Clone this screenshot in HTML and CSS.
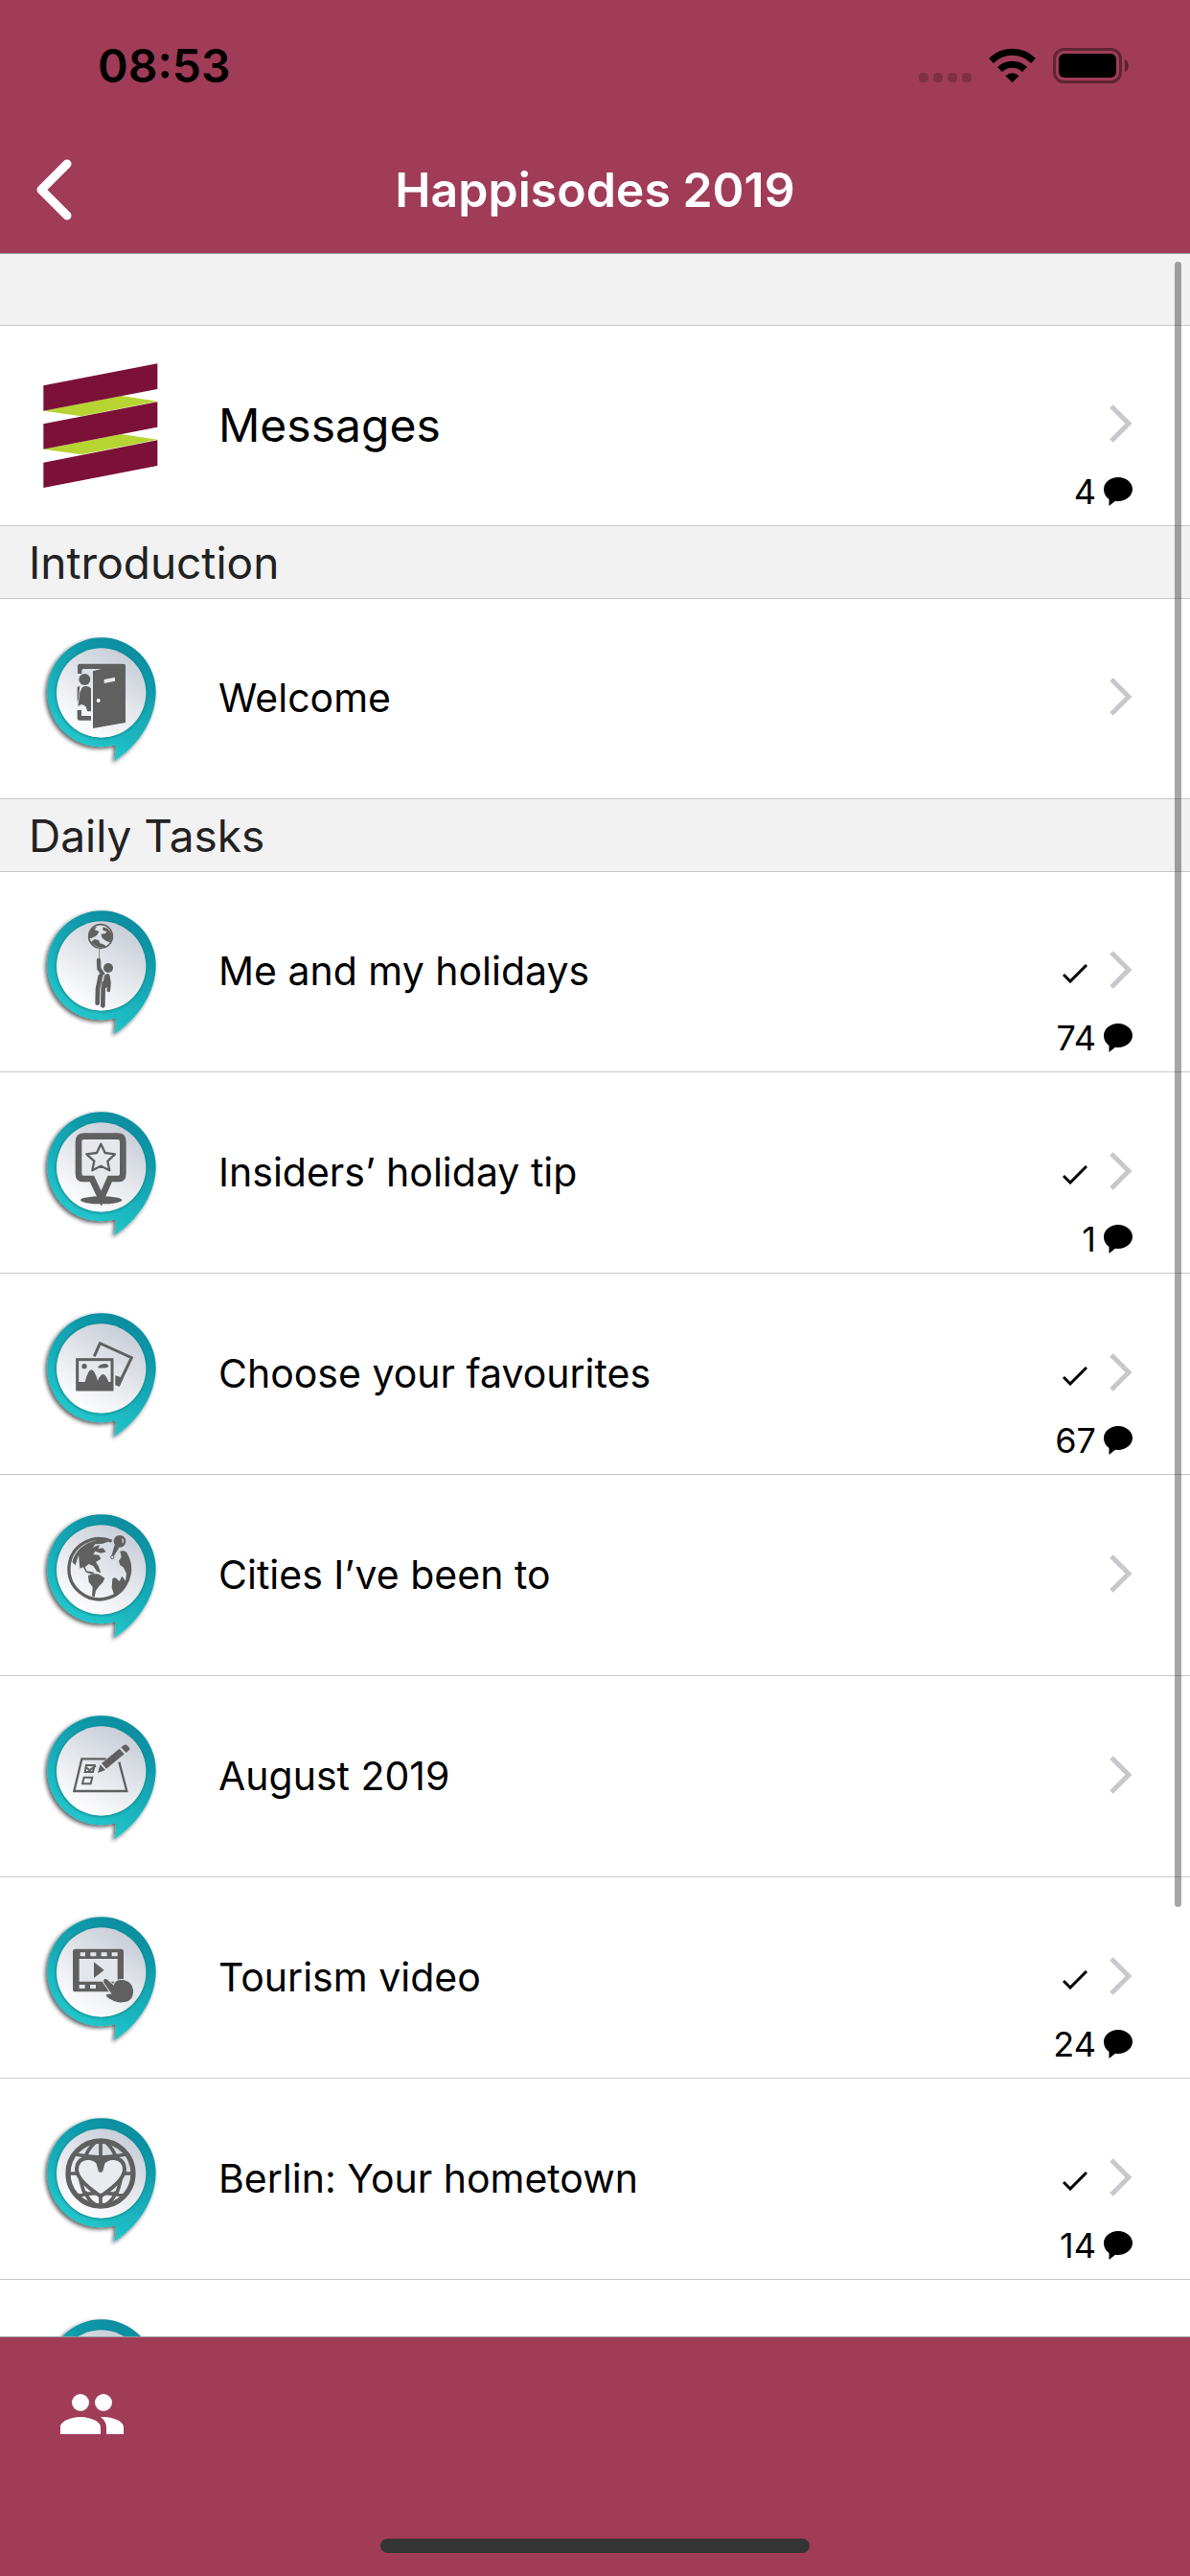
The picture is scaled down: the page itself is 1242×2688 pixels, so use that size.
FILE: index.html
```html
<!DOCTYPE html>
<html lang="en">
<head>
    <meta charset="UTF-8">
    <meta name="viewport" content="width=device-width, initial-scale=1.0">
    <title>Happisodes 2019</title>
    <link rel="stylesheet" href="styles.css">
</head>
<body>
    <!-- Shared shapes -->
    <svg class="defs" aria-hidden="true">
        <defs>
            <linearGradient id="teal" x1="0.75" y1="0.1" x2="0.3" y2="1">
                <stop offset="0" stop-color="#0b8fa1"/>
                <stop offset="1" stop-color="#26ced2"/>
            </linearGradient>
            <linearGradient id="silver" x1="0.8" y1="0.1" x2="0.3" y2="0.95">
                <stop offset="0" stop-color="#c9ced8"/>
                <stop offset="0.5" stop-color="#e4e7eb"/>
                <stop offset="1" stop-color="#fdfdfe"/>
            </linearGradient>
            <filter id="shadow" x="-20%" y="-20%" width="140%" height="140%">
                <feDropShadow dx="-6" dy="6" stdDeviation="6" flood-color="#000" flood-opacity="0.65"/>
            </filter>
            <filter id="soft" x="-20%" y="-20%" width="140%" height="140%">
                <feGaussianBlur stdDeviation="4"/>
            </filter>
            <symbol id="pin" viewBox="60 72 420 420">
                <path d="M302 427C288 431 272 433 258 433A170 171 0 0 1 258 91A170 171 0 0 1 428 262C428 340 380 425 296 478C302 462 303 445 302 427Z" fill="url(#teal)" filter="url(#shadow)"/>
                <circle cx="256" cy="266" r="141" fill="#066" opacity="0.6" filter="url(#soft)"/>
                <circle cx="257" cy="264" r="140" fill="url(#silver)"/>
            </symbol>
            <symbol id="chevron" viewBox="0 0 24 40">
                <path d="M2 2l18 18L2 38" fill="none" stroke="#c7c7cc" stroke-width="5"/>
            </symbol>
            <symbol id="check" viewBox="0 0 26 20">
                <path d="M1 11l7 7L25 1" fill="none" stroke="#000" stroke-width="3"/>
            </symbol>
            <symbol id="bubble" viewBox="0 0 30 30">
                <path d="M15 0c8.300 0 15 5.600 15 12.500S23.300 25 15 25c-1 0-2 0-3-.2L5.500 30v-7C2 20.500 0 17 0 12.500 0 5.600 6.700 0 15 0z"/>
            </symbol>
        </defs>
    </svg>

    <header class="topbar">
        <div class="status">
            <span class="time">08:53</span>
            <div class="status-icons">
                <svg width="55" height="37" viewBox="0 0 55 37" fill="#000" fill-opacity="0.2">
                    <rect y="26" width="10" height="10" rx="4"/>
                    <rect x="15" y="26" width="10" height="10" rx="4"/>
                    <rect x="30" y="26" width="10" height="10" rx="4"/>
                    <rect x="45" y="26" width="10" height="10" rx="4"/>
                </svg>
                <svg width="49" height="37" viewBox="0 0 49 37">
                    <path d="M24.500 36L17.500 29.200a10 10 0 0 1 14 0z"/>
                    <path d="M11.500 22.500a18.500 18.500 0 0 1 26 0" fill="none" stroke="#000" stroke-width="7"/>
                    <path d="M2.500 13.500a31 31 0 0 1 44 0" fill="none" stroke="#000" stroke-width="7"/>
                </svg>
                <svg width="79" height="37" viewBox="0 0 79 37">
                    <rect x="1.500" y="1.500" width="69" height="34" rx="10" fill="none" stroke="#000" stroke-opacity="0.4" stroke-width="3"/>
                    <rect x="6" y="6" width="60" height="25" rx="6"/>
                    <path d="M75 12c5 2 5 11 0 13z" fill-opacity="0.45"/>
                </svg>
            </div>
        </div>
        <nav class="navbar">
            <button class="back" type="button" aria-label="Back">
                <svg width="40" height="64" viewBox="0 0 40 64"><path d="M33 5L6 32l27 27" fill="none" stroke="#fff" stroke-width="9" stroke-linecap="round" stroke-linejoin="round"/></svg>
            </button>
            <h1>Happisodes 2019</h1>
        </nav>
    </header>

    <main class="content">
        <h2 class="section"></h2>
        <ul class="list">
            <li class="row">
                <a href="#messages">
                    <svg class="badge" viewBox="60 72 420 420">
                        <path d="M76 236L195 253L433 206L319 189zM76 356L195 373L433 326L319 309z" fill="#b7d433"/>
                        <path d="M76 157L433 88V168L76 236zM76 277L433 208V287L76 356zM76 398L433 328V408L76 477z" fill="#7b1137"/>
                    </svg>
                    <span class="title large">Messages</span>
                    <span class="meta">
                        <span class="marks"><svg class="chevron"><use href="#chevron"/></svg></span>
                        <span class="count">4<svg class="bubble"><use href="#bubble"/></svg></span>
                    </span>
                </a>
            </li>
        </ul>

        <h2 class="section">Introduction</h2>
        <ul class="list">
            <li class="row">
                <a href="#welcome">
                    <svg class="badge" viewBox="60 72 420 420">
                        <use href="#pin" x="60" y="72" width="420" height="420"/>
                        <g fill="#606060">
                            <path d="M190 173H326Q333 173 333 180V357L231 375V196L258 189H201Q196 189 196 196V204H183V181Q183 173 190 173z"/>
                            <circle cx="205" cy="222" r="18"/>
                            <path d="M198 246Q214 238 225 250V322H214L208 306L196 300L184 306L190 262z"/>
                            <path d="M182 318H195V336H225V350H189Q182 350 182 342z"/>
                            <path d="M182 246L190 242L186 280L182 296z"/>
                        </g>
                        <path d="M266 222L300 215V227L266 234z" fill="#e8eaee"/>
                        <circle cx="248" cy="288" r="6" fill="#fff"/>
                    </svg>
                    <span class="title">Welcome</span>
                    <span class="meta">
                        <span class="marks"><svg class="chevron"><use href="#chevron"/></svg></span>
                    </span>
                </a>
            </li>
        </ul>

        <h2 class="section">Daily Tasks</h2>
        <ul class="list">
            <li class="row">
                <a href="#holidays">
                    <svg class="badge" viewBox="60 72 420 420">
                        <use href="#pin" x="60" y="72" width="420" height="420"/>
                        <circle cx="255" cy="171" r="37" fill="#dfe2e7" stroke="#606060" stroke-width="5"/>
                        <g fill="#606060">
                            <path d="M219 164Q226 142 244 140L236 150L250 156L246 164L240 170L228 176L219 178z"/>
                            <path d="M262 142L276 146Q291 158 291 174L284 190L272 186L260 176L256 164L270 162L274 156L262 152z"/>
                            <path d="M224 190L236 180L250 184L252 192L268 198L272 203Q248 214 224 190z"/>
                            <circle cx="279" cy="270" r="15"/>
                        </g>
                        <path d="M251 208V242" stroke="#888" stroke-width="3"/>
                        <g fill="none" stroke="#606060" stroke-linecap="round">
                            <path d="M249 246L250 272L262 290" stroke-width="13"/>
                            <path d="M278 294L282 316L280 340" stroke-width="11"/>
                            <path d="M254 296L246 335L245 380M268 300L263 335L262 388" stroke-width="14"/>
                            <path d="M276 296L270 326" stroke-width="14"/>
                        </g>
                        <path d="M265 291L262 312" stroke="#e5e7eb" stroke-width="4"/>
                    </svg>
                    <span class="title">Me and my holidays</span>
                    <span class="meta">
                        <span class="marks"><svg class="check"><use href="#check"/></svg><svg class="chevron"><use href="#chevron"/></svg></span>
                        <span class="count">74<svg class="bubble"><use href="#bubble"/></svg></span>
                    </span>
                </a>
            </li>
            <li class="row">
                <a href="#tip">
                    <svg class="badge" viewBox="60 72 420 420">
                        <use href="#pin" x="60" y="72" width="420" height="420"/>
                        <ellipse cx="257" cy="367" rx="65" ry="12" fill="#606060"/>
                        <path d="M204 167H308Q325 167 325 184V284Q325 300 310 300H284L257 362L228 300H202Q186 300 186 284V184Q186 167 204 167z" fill="#e6e8ec" stroke="#606060" stroke-width="20"/>
                        <path d="M243 340H271L262 372H252z" fill="#606060"/>
                        <path d="M256 191L269 219L300 223L277 245L283 274L256 260L229 274L235 245L211 223L243 219z" fill="none" stroke="#606060" stroke-width="7" stroke-linejoin="round"/>
                    </svg>
                    <span class="title">Insiders’ holiday tip</span>
                    <span class="meta">
                        <span class="marks"><svg class="check"><use href="#check"/></svg><svg class="chevron"><use href="#chevron"/></svg></span>
                        <span class="count">1<svg class="bubble"><use href="#bubble"/></svg></span>
                    </span>
                </a>
            </li>
            <li class="row">
                <a href="#favourites">
                    <svg class="badge" viewBox="60 72 420 420">
                        <use href="#pin" x="60" y="72" width="420" height="420"/>
                        <path d="M235 226L253 185L352 230L311 315" fill="none" stroke="#606060" stroke-width="9"/>
                        <path d="M301 286L326 294L314 321L301 316z" fill="#606060"/>
                        <rect x="182" y="236" width="109" height="94" fill="#e6e8ec" stroke="#606060" stroke-width="9"/>
                        <path d="M186 306H206Q216 268 226 268Q236 268 246 302Q254 282 263 282Q271 282 280 306H290V330H186z" fill="#606060"/>
                        <circle cx="204" cy="257" r="8" fill="#606060"/>
                        <path d="M246 262Q250 250 268 249Q280 250 280 258Q272 264 246 262z" fill="#606060"/>
                    </svg>
                    <span class="title">Choose your favourites</span>
                    <span class="meta">
                        <span class="marks"><svg class="check"><use href="#check"/></svg><svg class="chevron"><use href="#chevron"/></svg></span>
                        <span class="count">67<svg class="bubble"><use href="#bubble"/></svg></span>
                    </span>
                </a>
            </li>
            <li class="row">
                <a href="#cities">
                    <svg class="badge" viewBox="60 72 420 420">
                        <use href="#pin" x="60" y="72" width="420" height="420"/>
                        <path d="M290 175A95 95 0 1 0 330 209" fill="none" stroke="#606060" stroke-width="10"/>
                        <g fill="#606060">
                            <path d="M166 240Q180 185 246 170Q270 166 284 174L262 182L238 184L230 196L240 190L252 186L248 198L262 196L272 208L256 212L238 206L232 216L250 218L256 230L240 240L248 252L256 274L244 270L232 252L218 246L206 256L212 268L236 272L228 278L210 272L200 256L190 260L186 218L176 250z"/>
                            <path d="M216 282L232 276L250 278L268 290L262 304L250 316L240 330L236 350L228 346L230 318L218 302z"/>
                            <path d="M316 206L328 204Q350 230 352 268L344 300L334 296L336 276L326 256L316 250L312 236L320 224z"/>
                            <path d="M292 292L300 288L314 300L322 284L332 298L338 308L318 336L298 344L290 320z"/>
                            <circle cx="315" cy="175" r="19"/>
                            <path d="M299 186L313 195L296 222L288 224z"/>
                        </g>
                        <circle cx="292" cy="225" r="5" fill="#eee" stroke="#606060" stroke-width="3"/>
                        <path d="M322 167Q328 173 324 180" fill="none" stroke="#ccc" stroke-width="4"/>
                    </svg>
                    <span class="title">Cities I’ve been to</span>
                    <span class="meta">
                        <span class="marks"><svg class="chevron"><use href="#chevron"/></svg></span>
                    </span>
                </a>
            </li>
            <li class="row">
                <a href="#august">
                    <svg class="badge" viewBox="60 72 420 420">
                        <use href="#pin" x="60" y="72" width="420" height="420"/>
                        <g fill="none" stroke="#606060">
                            <path d="M272 226H196L172 327H337L313 236" stroke-width="7"/>
                            <path d="M203 284H229L224 304H198zM210 246H236L231 267H206zM212 254L220 262L240 248" stroke-width="6"/>
                        </g>
                        <g fill="#606060">
                            <path d="M258 240L314 194L329 211L273 257z"/>
                            <path d="M319 190L332 181Q342 184 347 196L335 207z"/>
                            <path d="M254 244L270 261L246 270z"/>
                        </g>
                    </svg>
                    <span class="title">August 2019</span>
                    <span class="meta">
                        <span class="marks"><svg class="chevron"><use href="#chevron"/></svg></span>
                    </span>
                </a>
            </li>
            <li class="row">
                <a href="#video">
                    <svg class="badge" viewBox="60 72 420 420">
                        <use href="#pin" x="60" y="72" width="420" height="420"/>
                        <rect x="168" y="191" width="159" height="134" rx="8" fill="#606060"/>
                        <path d="M188 222H308V293H188zM191 202H207V214H191zM223 202H241V214H223zM257 202H275V214H257zM290 202H308V214H290zM188 303H206V315H188zM222 303H240V315H222z" fill="#e3e6ea"/>
                        <path d="M234 232L266 257L234 282z" fill="#606060"/>
                        <path d="M265 296Q262 282 274 286L296 305Q300 288 320 288Q356 290 357 325Q356 358 322 358Q300 360 276 342Q268 332 282 332L290 332z" fill="#606060" stroke="#e3e6ea" stroke-width="6" paint-order="stroke"/>
                    </svg>
                    <span class="title">Tourism video</span>
                    <span class="meta">
                        <span class="marks"><svg class="check"><use href="#check"/></svg><svg class="chevron"><use href="#chevron"/></svg></span>
                        <span class="count">24<svg class="bubble"><use href="#bubble"/></svg></span>
                    </span>
                </a>
            </li>
            <li class="row">
                <a href="#berlin">
                    <svg class="badge" viewBox="60 72 420 420">
                        <use href="#pin" x="60" y="72" width="420" height="420"/>
                        <g fill="none" stroke="#606060">
                            <circle cx="255" cy="264" r="102" stroke-width="16"/>
                            <path d="M255 162V220M255 335V366M153 264H186M324 264H357M176 204Q255 222 334 204M180 334Q255 316 330 334M238 166Q212 190 204 222M272 166Q298 190 306 222M206 320Q216 350 240 362M304 320Q294 350 270 362M192 220Q180 264 206 330M318 220Q330 264 304 330" stroke-width="11"/>
                        </g>
                        <path d="M255 335Q180 286 180 250Q182 218 214 215Q240 216 255 238Q270 216 296 215Q328 218 330 250Q330 286 255 335z" fill="#e9ebef" stroke="#606060" stroke-width="12"/>
                        <path d="M236 212H274L262 256Q255 266 248 256z" fill="#606060"/>
                    </svg>
                    <span class="title">Berlin: Your hometown</span>
                    <span class="meta">
                        <span class="marks"><svg class="check"><use href="#check"/></svg><svg class="chevron"><use href="#chevron"/></svg></span>
                        <span class="count">14<svg class="bubble"><use href="#bubble"/></svg></span>
                    </span>
                </a>
            </li>
            <li class="row">
                <a href="#next" aria-label="Next task">
                    <svg class="badge" viewBox="60 72 420 420">
                        <use href="#pin" x="60" y="72" width="420" height="420"/>
                    </svg>
                </a>
            </li>
        </ul>
        <div class="scrollbar"></div>
    </main>

    <footer class="toolbar">
        <button class="people" type="button" aria-label="Members">
            <svg width="72" height="72" viewBox="0 0 24 24" fill="#fff">
                <circle cx="8" cy="8" r="3"/>
                <circle cx="16" cy="8" r="3"/>
                <path d="M8 13c-2.330 0-7 1.170-7 3.500V19h14v-2.500c0-2.330-4.670-3.500-7-3.500zM16 13c-.29 0-.62.02-.97.05 1.160.84 1.970 1.970 1.970 3.450V19h6v-2.500c0-2.330-4.670-3.500-7-3.500z"/>
            </svg>
        </button>
        <div class="home-indicator"></div>
    </footer>
</body>
</html>
```

FILE: styles.css
```css
* {
    box-sizing: border-box;
}
body {
    display: flex;
    flex-direction: column;
    height: 100vh;
    margin: 0;
    font-family: Inter, "Liberation Sans", sans-serif;
    background-color: #fff;
    color: #000;
}
svg {
    display: block;
    flex: none;
}
button {
    padding: 0;
    border: none;
    background: none;
    cursor: pointer;
}
.defs {
    position: absolute;
    width: 0;
    height: 0;
}

/* Header */
.topbar {
    flex: none;
    background-color: #a03c58;
    border-bottom: 1px solid #999;
}
.status {
    display: flex;
    align-items: center;
    justify-content: space-between;
    height: 132px;
    padding: 4px 64px 0 102px;
}
.time {
    font-size: 48px;
    font-weight: 600;
}
.status-icons {
    display: flex;
    gap: 18px;
}
.navbar {
    display: grid;
    grid-template-columns: 1fr auto 1fr;
    align-items: center;
    height: 132px;
    padding: 0 37px;
}
.navbar h1 {
    margin: 0;
    font-size: 50px;
    font-weight: 600;
    color: #fff;
}
.back {
    justify-self: start;
}

/* List */
.content {
    position: relative;
    flex: 1;
    min-height: 0;
    overflow: hidden;
}
.section {
    height: 76px;
    margin: 0;
    padding: 0 30px;
    border-bottom: 1px solid #c8c7cc;
    background-color: #f2f2f2;
    color: #222;
    font-size: 46px;
    font-weight: 400;
    line-height: 76px;
}
.section:empty {
    height: 75px;
}
.list {
    margin: 0;
    padding: 0;
    list-style: none;
}
.row {
    border-bottom: 1px solid #c8c7cc;
}
.row + .row {
    padding-top: 1px;
}
.row a {
    display: flex;
    align-items: center;
    height: 208px;
    padding: 0 60px 0 40px;
    color: inherit;
    text-decoration: none;
}
.badge {
    width: 140px;
    height: 140px;
    margin-right: 48px;
}
.title {
    flex: 1;
    padding-bottom: 2px;
    font-size: 41px;
}
.title.large {
    font-size: 48px;
}
.meta {
    display: grid;
    grid-template-rows: 1fr auto 1fr;
    justify-items: end;
    align-self: stretch;
}
.marks {
    display: flex;
    grid-row: 2;
    align-items: center;
    gap: 23px;
    padding-bottom: 4px;
}
.check {
    width: 26px;
    height: 20px;
    margin-top: 8px;
}
.chevron {
    width: 24px;
    height: 40px;
}
.count {
    display: flex;
    grid-row: 3;
    align-items: center;
    align-self: end;
    gap: 8px;
    padding-bottom: 13px;
    font-size: 36px;
    line-height: 44px;
}
.bubble {
    width: 30px;
    height: 30px;
}
.scrollbar {
    position: absolute;
    top: 8px;
    right: 9px;
    width: 7px;
    height: 79%;
    border-radius: 4px;
    background-color: rgba(0, 0, 0, 0.35);
}

/* Bottom bar */
.toolbar {
    display: flex;
    flex: none;
    flex-direction: column;
    align-items: center;
    justify-content: space-between;
    height: 250px;
    padding: 44px 60px 24px;
    border-top: 1px solid #999;
    background-color: #a03c58;
}
.people {
    align-self: flex-start;
}
.home-indicator {
    width: 40%;
    height: 15px;
    border-radius: 8px;
    background-color: #343434;
}
```
